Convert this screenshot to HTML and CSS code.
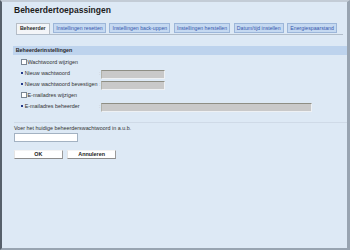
FILE: index.html
```html
<!DOCTYPE html>
<html>
<head>
<meta charset="utf-8">
<link rel="stylesheet" href="styles.css">
</head>
<body>
<div class="frame">
  <h1 class="title">Beheerdertoepassingen</h1>
  <div class="tabs">
    <span class="tab active">Beheerder</span>
    <span class="tab">Instellingen resetten</span>
    <span class="tab">Instellingen back-uppen</span>
    <span class="tab">Instellingen herstellen</span>
    <span class="tab">Datum/tijd instellen</span>
    <span class="tab">Energiespaarstand</span>
  </div>
  <div class="section-bar">Beheerderinstellingen</div>
  <div class="form">
    <div class="row"><span class="check"></span><span class="label-check">Wachtwoord wijzigen</span></div>
    <div class="row"><span class="label"><span class="bullet"></span>Nieuw wachtwoord</span><span class="colon">:</span><span class="field"></span></div>
    <div class="row"><span class="label"><span class="bullet"></span>Nieuw wachtwoord bevestigen</span><span class="colon">:</span><span class="field"></span></div>
    <div class="row"><span class="check"></span><span class="label-check">E-mailadres wijzigen</span></div>
    <div class="row"><span class="label"><span class="bullet"></span>E-mailadres beheerder</span><span class="colon">:</span><span class="field wide"></span></div>
  </div>
  <div class="separator"></div>
  <div class="prompt">Voer het huidige beheerderswachtwoord in a.u.b.</div>
  <div class="pw-input"></div>
  <div class="buttons">
    <span class="btn">OK</span>
    <span class="btn">Annuleren</span>
  </div>
</div>
</body>
</html>
```

FILE: styles.css
```css
html, body {
  margin: 0;
  padding: 0;
}
body {
  font-family: "Liberation Sans", Arial, sans-serif;
  background: #dde9f5;
}
.frame {
  box-sizing: border-box;
  width: 350px;
  height: 250px;
  background: #dde9f5;
  border-top: 2px solid #c3ccd6;
  border-left: 2px solid #56606b;
  border-right: 3px solid #98a4b1;
  border-bottom: 2px solid #98a4b1;
  padding-left: 12px;
  overflow: hidden;
}
.title {
  margin: 3.4px 0 0 0;
  font-size: 8.5px;
  line-height: 10px;
  font-weight: bold;
  color: #1c1c1c;
}
.tabs {
  display: flex;
  align-items: flex-start;
  gap: 3.5px;
  margin: 7.3px 4px 0 1.7px;
  border-bottom: 1px solid #b1bdca;
}
.tab {
  font-size: 5.2px;
  line-height: 8.6px;
  padding: 0 2.1px;
  border: 1px solid #9cb6d9;
  background: #c5d9f1;
  color: #3658ad;
  white-space: nowrap;
}
.tab.active {
  background: #f3f5f8;
  border-color: #b7bec6;
  border-bottom: none;
  padding: 0 3.2px 1.7px 3.2px;
  color: #2a2a2a;
  font-weight: bold;
}
.section-bar {
  margin-top: 11px;
  margin-left: -0.7px;
  height: 9px;
  line-height: 9px;
  background: #bdd3ed;
  padding-left: 2.4px;
  font-size: 5.4px;
  font-weight: bold;
  color: #2a2a2a;
}
.form {
  margin-top: 1.8px;
  padding-left: 6.7px;
}
.row {
  display: flex;
  align-items: center;
  height: 11px;
  font-size: 5.4px;
  color: #333;
}
.check {
  box-sizing: border-box;
  width: 6px;
  height: 6px;
  background: #fff;
  border: 1px solid #7b8693;
  margin-right: 0.8px;
}
.label {
  display: flex;
  align-items: center;
  width: 78.3px;
  white-space: nowrap;
}
.bullet {
  width: 2.3px;
  height: 2.3px;
  background: #23398a;
  margin-right: 1.7px;
}
.colon {
  width: 2.4px;
  color: #a9b3bd;
  font-size: 5px;
}
.field {
  box-sizing: border-box;
  align-self: flex-end;
  width: 63.3px;
  height: 9px;
  background: #c9c9c9;
  border-top: 1px solid #8e8e84;
  border-left: 1px solid #b2b2aa;
  border-right: 1px solid #eef1f4;
  border-bottom: 1px solid #eef1f4;
}
.field.wide {
  width: 211px;
  height: 9.5px;
  margin-bottom: -0.7px;
}
.separator {
  margin-top: 10.5px;
  height: 1px;
  background: #cfdae7;
}
.prompt {
  margin-top: 2px;
  font-size: 5.4px;
  line-height: 7px;
  color: #333;
}
.pw-input {
  box-sizing: border-box;
  margin-top: 0.6px;
  width: 63.7px;
  height: 8.7px;
  background: #fff;
  border: 1px solid #a3b2c2;
}
.buttons {
  display: flex;
  gap: 4.6px;
  margin-top: 8.7px;
}
.btn {
  box-sizing: border-box;
  width: 48.7px;
  height: 8.6px;
  line-height: 7px;
  text-align: center;
  background: #fff;
  border-top: 1px solid #f4f4f4;
  border-left: 1px solid #e4e4e4;
  border-right: 1px solid #9a9a9a;
  border-bottom: 1px solid #8c8c8c;
  font-size: 5.4px;
  font-weight: bold;
  color: #1a1a1a;
}
```
